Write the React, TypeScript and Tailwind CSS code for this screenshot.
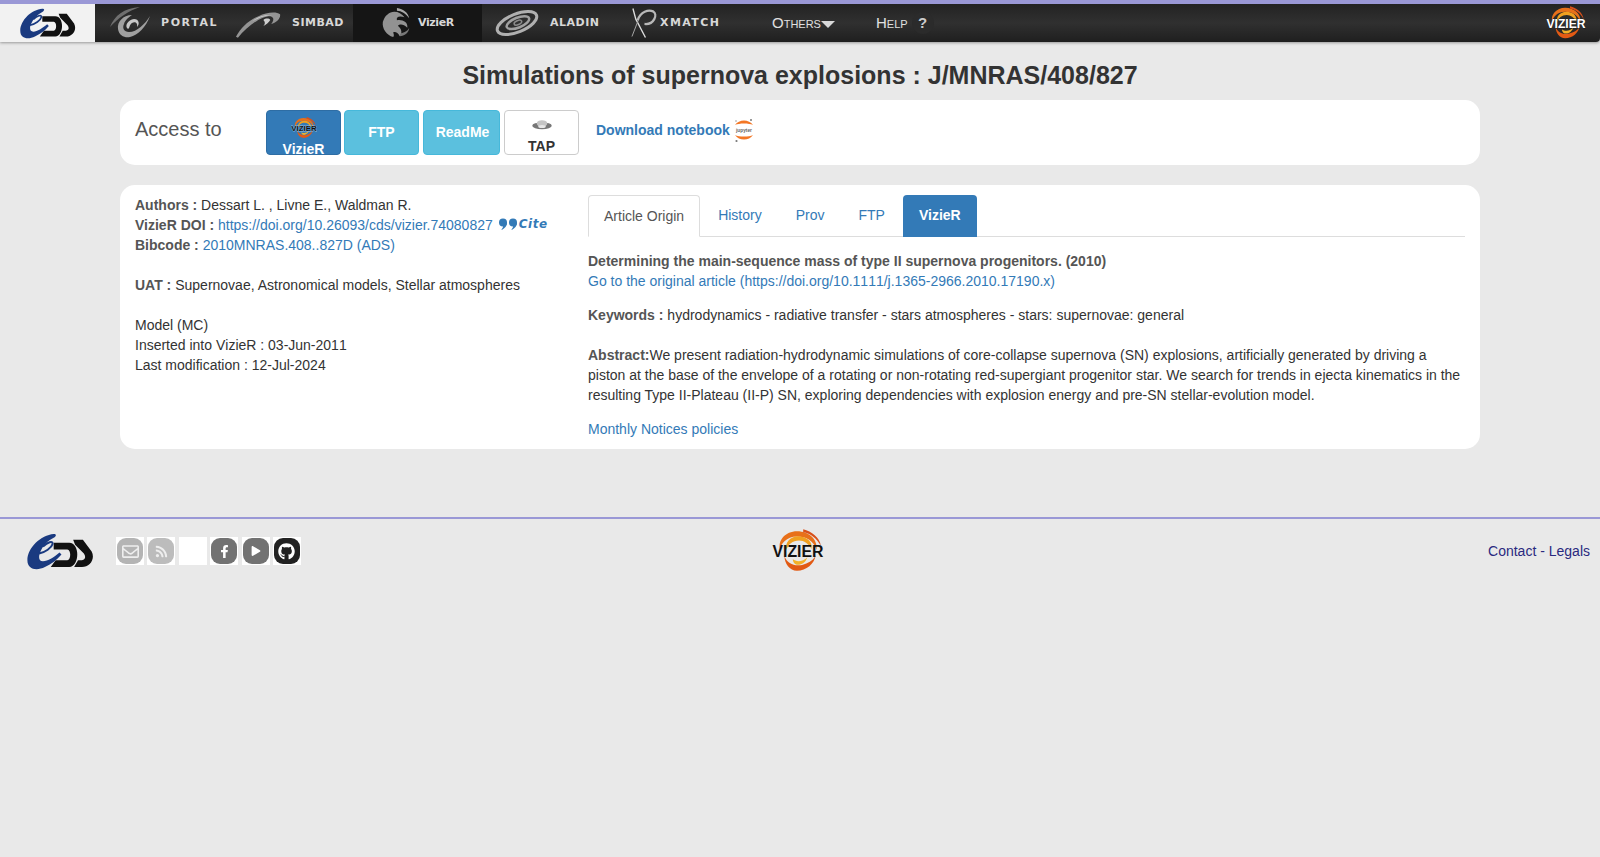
import { FaFacebookF, FaGithub, FaPlay, FaRegEnvelope, FaRss } from "react-icons/fa";

const CdsLogo = ({ className }: { className: string }) => (
  <svg viewBox="0 0 68 38" className={className}>
    <path d="M27 10 H43 C54 10 54 34 43 35 H24 L29 28 H41 C45 28 45 17 41 17 H27 Z" fill="#111" />
    <path d="M47 7 H57 L66 19 C70 27 64 35 56 35 H48 L52 28 H56 C60 27 60 24 58 21 L49 12 Z" fill="#111" />
    <path d="M27 1 C14 2 0 15 0 28 C0 38 10 39 18 35 C24 32 30 28 35 22 L33 20 C27 25 21 29 16 29 C12 29 11 25 13 20 C16 13 21 8 27 5 C30 3 30 1 27 1 Z" fill="#1a3a80" />
    <path d="M12 21 C18 20 25 15 26 11 C26 8 21 9 16 14" fill="none" stroke="#1a3a80" strokeWidth="2" />
  </svg>
);

const VizierLogo = ({ className, variant }: { className: string; variant: "nav" | "button" | "plain" }) => {
  const fill = variant === "nav" ? "#fff" : "#111";
  const stroke = variant === "nav" ? "#111" : variant === "button" ? "#fff" : "none";
  return (
    <svg viewBox="0 0 50 42" className={className}>
      <path d="M24 2 C36 2 44 10 43 20 C40 11 33 7 24 7 C14 7 8 14 8 20 C5 11 13 2 24 2 Z" fill="#e8701a" />
      <path d="M30 0 C38 2 46 8 47 16 C43 9 37 4 30 3 Z" fill="#d8501a" />
      <path d="M27 7 C35 8 39 13 38 19 C35 14 31 11 26 11 C20 11 15 15 14 20 C12 13 18 6 27 7 Z" fill="#f0a020" />
      <path d="M12 26 C15 34 24 37 33 33 C38 31 41 28 42 25 C41 33 33 40 24 40 C17 40 12 33 12 26 Z" fill="#e25a14" />
      <path d="M20 29 C24 32 30 31 34 27 C32 33 27 35 23 34 C21 33 20 31 20 29 Z" fill="#f3b028" />
      <text
        x="25"
        y="27"
        textAnchor="middle"
        fontFamily="'Liberation Sans', sans-serif"
        fontWeight="700"
        fontSize="15"
        textLength="49"
        lengthAdjust="spacingAndGlyphs"
        fill={fill}
        stroke={stroke}
        strokeWidth={variant === "plain" ? 0 : 0.6}
        paintOrder="stroke"
      >
        VIZIER
      </text>
    </svg>
  );
};

const PortalIcon = () => (
  <svg viewBox="0 0 40 32" className="w-[40px] h-[32px]">
    <path d="M0 20 C4 9 14 1 30 0 C18 4 8 11 0 20 Z" fill="#6f6f6f" />
    <path d="M22 8 C13 8 7 15 8 22 C9 29 15 31 20 30 C28 28 36 20 40 9 C35 17 27 25 19 25 C14 25 12 21 14 17 C15 13 19 10 22 8 Z" fill="#a0a0a0" />
    <path d="M18 22 C14 19 18 13 24 12 C29 12 30 17 27 20 C28 16 25 14 22 16 C19 18 20 21 18 22 Z" fill="#c8c8c8" />
  </svg>
);

const SimbadIcon = () => (
  <svg viewBox="0 0 48 32" className="w-[47px] h-[32px]">
    <path d="M1 30 C6 21 14 13 24 9 C32 5 42 4 46 7 C47 11 42 16 37 17 C40 13 40 10 36 9 C26 9 12 20 3 31 Z" fill="#949494" />
    <path d="M18 14 C24 9 32 7 38 8 C30 8 24 11 18 14 Z" fill="#d0d0d0" />
    <path d="M29 13 C31 11 35 11 36 13 C35 15 32 18 29 19 C31 17 31 15 29 13 Z" fill="#cfcfcf" />
  </svg>
);

const VizierNavIcon = () => (
  <svg viewBox="0 0 34 32" className="w-[32px] h-[32px]">
    <path d="M18 0 C25 1 30 5 31 11 C27 6 23 3 18 3 Z" fill="#a8a8a8" />
    <path d="M8 7 C13 2 22 4 26 10 C20 8 17 10 18 13 C24 12 30 15 29 21 C25 17 21 17 19 19 C23 22 24 27 21 30 C19 26 16 25 14 26 C15 28 15 30 14 31 C7 29 2 22 3 15 C4 12 5 9 8 7 Z" fill="#929292" />
    <path d="M22 27 C26 26 30 24 31 21 C31 26 26 30 21 30 Z" fill="#777" />
  </svg>
);

const AladinIcon = () => (
  <svg viewBox="0 0 46 32" className="w-[46px] h-[32px]">
    <g transform="rotate(-22 23 16)" fill="none">
      <ellipse cx="23" cy="16" rx="21" ry="9" stroke="#b0b0b0" strokeWidth="3" />
      <ellipse cx="24" cy="16" rx="12" ry="5" stroke="#a0a0a0" strokeWidth="2.5" />
      <ellipse cx="24" cy="16" rx="4" ry="2" stroke="#8a8a8a" strokeWidth="1.5" />
    </g>
  </svg>
);

const XmatchIcon = () => (
  <svg viewBox="0 0 28 32" className="w-[27px] h-[32px]" fill="none">
    <path d="M2 1 L5 12 L15 31" stroke="#ddd" strokeWidth="1.4" />
    <path d="M8 12 L1 30" stroke="#aaa" strokeWidth="1" />
    <path d="M7 13 C10 4 18 2 23 4 C28 7 24 18 14 17" stroke="#b8b8b8" strokeWidth="2.4" />
  </svg>
);

const JupyterIcon = () => (
  <svg viewBox="0 0 22 26" className="w-[22px] h-[26px]">
    <path d="M2 8 C6 2 16 2 20 8 C16 6 6 6 2 8 Z" fill="#f37726" />
    <path d="M2 18 C6 24 16 24 20 18 C16 20 6 20 2 18 Z" fill="#f37726" />
    <circle cx="18" cy="3" r="1" fill="#777" />
    <circle cx="3" cy="4" r="0.8" fill="#999" />
    <circle cx="3.5" cy="24" r="1.1" fill="#777" />
    <text x="11" y="15" textAnchor="middle" fontSize="6" textLength="16" lengthAdjust="spacingAndGlyphs" fontFamily="'Liberation Sans', sans-serif" fill="#666">jupyter</text>
  </svg>
);

const TapIcon = () => (
  <svg viewBox="0 0 28 16" className="w-[28px] h-[16px]">
    <ellipse cx="14" cy="9" rx="13" ry="4.5" fill="#777" />
    <ellipse cx="14" cy="6" rx="7" ry="4.5" fill="#c4c4c4" />
    <ellipse cx="14" cy="10" rx="5" ry="2" fill="#e6e6e6" />
  </svg>
);

const CiteQuotes = () => (
  <svg viewBox="0 0 20 12" className="w-[20px] h-[12px]" fill="#337ab7">
    <circle cx="5" cy="4.5" r="4" />
    <path d="M9 4.5 C9 8 7 10.5 3 12 C5 10 5.5 8 5 7 Z" />
    <circle cx="15" cy="4.5" r="4" />
    <path d="M19 4.5 C19 8 17 10.5 13 12 C15 10 15.5 8 15 7 Z" />
  </svg>
);

const NavText = ({ children, className }: { children: string; className: string }) => (
  <span className={`font-['DejaVu_Sans',sans-serif] font-bold text-[11px] text-[#d8d8d8] whitespace-nowrap ${className}`}>
    {children}
  </span>
);

const socials = [
  { blob: "bg-[#b4b4b4]", icon: <FaRegEnvelope className="text-[#eee] w-[17px] h-[17px]" /> },
  { blob: "bg-[#bcbcbc]", icon: <FaRss className="text-[#eee] w-[13px] h-[13px]" /> },
  null,
  { blob: "bg-[#727272]", icon: <FaFacebookF className="text-white w-[13px] h-[13px]" /> },
  { blob: "bg-[#727272]", icon: <FaPlay className="text-white w-[10px] h-[10px]" /> },
  { blob: "bg-[#222222]", icon: <FaGithub className="text-white w-[17px] h-[17px]" /> },
];

export default function App() {
  return (
    <div className="min-h-[857px] bg-[#e9e9e9] font-['Liberation_Sans',Arial,sans-serif] text-[14px] leading-[20px] text-[#333]">
      <header className="h-[42px] border-t-4 border-[#9a98d6] bg-gradient-to-b from-[#232323] via-[#303030] to-[#1f1f1f] rounded-br-[4px] shadow-[0_1px_3px_rgba(0,0,0,0.35)] flex items-center">
        <div className="w-[95px] h-full bg-[#f2f2f2] flex items-center justify-center">
          <CdsLogo className="w-[56px] h-[31px]" />
        </div>
        <div className="w-[132px] h-full flex items-center pl-[15px] gap-[11px]">
          <PortalIcon />
          <NavText className="tracking-[1.6px]">PORTAL</NavText>
        </div>
        <div className="w-[126px] h-full flex items-center pl-[8px] gap-[10px]">
          <SimbadIcon />
          <NavText className="tracking-[0.5px]">SIMBAD</NavText>
        </div>
        <div className="w-[129px] h-full bg-[#151515] flex items-center pl-[27px] gap-[6px]">
          <VizierNavIcon />
          <NavText className="tracking-[-0.4px]">VizieR</NavText>
        </div>
        <div className="w-[130px] h-full flex items-center pl-[12px] gap-[10px]">
          <AladinIcon />
          <NavText className="tracking-[0.5px]">ALADIN</NavText>
        </div>
        <div className="w-[160px] h-full flex items-center pl-[19px] gap-[2px]">
          <XmatchIcon />
          <NavText className="tracking-[1.4px]">XMATCH</NavText>
        </div>
        <div className="w-[104px] flex items-center text-[#e0e0e0] text-[15px] [font-variant:small-caps]">
          Others
          <span className="w-0 h-0 border-x-[7px] border-x-transparent border-t-[7px] border-t-[#d8d8d8] mt-[2px]" />
        </div>
        <div className="flex items-center text-[#e0e0e0] text-[15px] [font-variant:small-caps]">
          Help
          <span className="ml-[4px] w-[22px] h-[22px] rounded-full bg-[#2b2b2b] flex items-center justify-center font-bold text-[#ccc] text-[15px]">?</span>
        </div>
        <div className="ml-auto mr-[14px] flex items-center">
          <VizierLogo variant="nav" className="w-[40px] h-[34px]" />
        </div>
      </header>

      <main className="px-[120px]">
        <h1 className="pt-[17px] pb-[9px] text-center text-[25px] leading-[32px] font-bold text-[#333]">
          Simulations of supernova explosions : J/MNRAS/408/827
        </h1>

        <section className="h-[65px] bg-white rounded-[15px] flex items-center pl-[15px]">
          <span className="w-[131px] text-[20px] text-[#555] -mt-[7px]">Access to</span>
          <div className="flex gap-[3px] items-start font-bold text-[14px] text-white">
            <div className="w-[75px] h-[45px] bg-[#337ab7] border border-[#2e6da4] rounded-[4px] flex flex-col items-center overflow-hidden pt-[6px]">
              <VizierLogo variant="button" className="w-[26px] h-[22px] shrink-0" />
              <span className="leading-[16px] mt-[2px]">VizieR</span>
            </div>
            <div className="w-[75px] h-[45px] pb-[2px] bg-[#5bc0de] border border-[#46b8da] rounded-[4px] flex items-center justify-center">FTP</div>
            <div className="w-[77px] h-[45px] ml-[1px] pb-[2px] pl-[2px] bg-[#5bc0de] border border-[#46b8da] rounded-[4px] flex items-center justify-center">ReadMe</div>
            <div className="w-[75px] h-[45px] ml-[1px] bg-white border border-[#ccc] rounded-[4px] flex flex-col items-center text-[#333] pt-[8px]">
              <TapIcon />
              <span className="leading-[16px] mt-[7px]">TAP</span>
            </div>
          </div>
          <a className="ml-[17px] -mt-[6px] font-bold text-[#337ab7] flex items-center gap-[3px]">
            Download notebook
            <JupyterIcon />
          </a>
        </section>

        <section className="mt-[20px] bg-white rounded-[15px] flex px-[15px] pt-[10px] pb-[10px]">
          <div className="w-[453px] shrink-0">
            <div><b className="text-[#555]">Authors : </b>Dessart L. , Livne E., Waldman R.</div>
            <div className="flex items-center">
              <span><b className="text-[#555]">VizieR DOI : </b><a className="text-[#337ab7]">https://doi.org/10.26093/cds/vizier.74080827</a></span>
              <span className="ml-[5px] -mt-[3px] flex items-center gap-[1px] text-[#337ab7] font-['DejaVu_Sans',sans-serif] font-bold italic text-[12px] tracking-[0.5px]">
                <CiteQuotes />
                Cite
              </span>
            </div>
            <div><b className="text-[#555]">Bibcode : </b><a className="text-[#337ab7]">2010MNRAS.408..827D (ADS)</a></div>
            <div className="mt-[20px]"><b className="text-[#555]">UAT : </b>Supernovae, Astronomical models, Stellar atmospheres</div>
            <div className="mt-[20px]">Model (MC)</div>
            <div className="[font-kerning:none]">Inserted into VizieR : 03-Jun-2011</div>
            <div>Last modification : 12-Jul-2024</div>
          </div>

          <div className="flex-1 min-w-0">
            <div className="h-[42px] flex border-b border-[#ddd]">
              <div className="h-[42px] px-[15px] leading-[40px] bg-white border border-[#ddd] border-b-white rounded-t-[4px] text-[#555]">Article Origin</div>
              <div className="h-[41px] ml-[3px] px-[15px] leading-[41px] text-[#337ab7]">History</div>
              <div className="h-[41px] ml-[4px] px-[15px] leading-[41px] text-[#337ab7]">Prov</div>
              <div className="h-[41px] ml-[4px] px-[15px] leading-[41px] text-[#337ab7]">FTP</div>
              <div className="h-[42px] ml-[3px] px-[16px] leading-[41px] bg-[#337ab7] rounded-t-[4px] text-white font-bold">VizieR</div>
            </div>
            <div className="mt-[14px] font-bold text-[#555]">Determining the main-sequence mass of type II supernova progenitors. (2010)</div>
            <a className="block text-[#337ab7] [font-kerning:none]">Go to the original article (https://doi.org/10.1111/j.1365-2966.2010.17190.x)</a>
            <div className="mt-[14px]"><b className="text-[#555]">Keywords : </b>hydrodynamics - radiative transfer - stars atmospheres - stars: supernovae: general</div>
            <p className="mt-[20px]"><b className="text-[#555]">Abstract:</b>We present radiation-hydrodynamic simulations of core-collapse supernova (SN) explosions, artificially generated by driving a piston at the base of the envelope of a rotating or non-rotating red-supergiant progenitor star. We search for trends in ejecta kinematics in the resulting Type II-Plateau (II-P) SN, exploring dependencies with explosion energy and pre-SN stellar-evolution model.</p>
            <a className="block mt-[14px] text-[#337ab7]">Monthly Notices policies</a>
          </div>
        </section>
      </main>

      <footer className="mt-[68px] border-t-2 border-[#9a98d6] h-[66px] flex items-center relative">
        <div className="flex items-center pl-[27px]">
          <CdsLogo className="w-[67px] h-[37px]" />
          <div className="ml-[22px] flex gap-[3.4px]">
            {socials.map((s, i) => (
              <div key={i} className="w-[28px] h-[28px] bg-white flex items-center justify-center">
                {s && <div className={`w-[26px] h-[26px] rounded-[9px] flex items-center justify-center ${s.blob}`}>{s.icon}</div>}
              </div>
            ))}
          </div>
        </div>
        <div className="absolute left-[772px] top-[10px]">
          <VizierLogo variant="plain" className="w-[52px] h-[44px]" />
        </div>
        <div className="ml-auto pr-[10px] text-[#2a2a80]">Contact - Legals</div>
      </footer>
    </div>
  );
}
